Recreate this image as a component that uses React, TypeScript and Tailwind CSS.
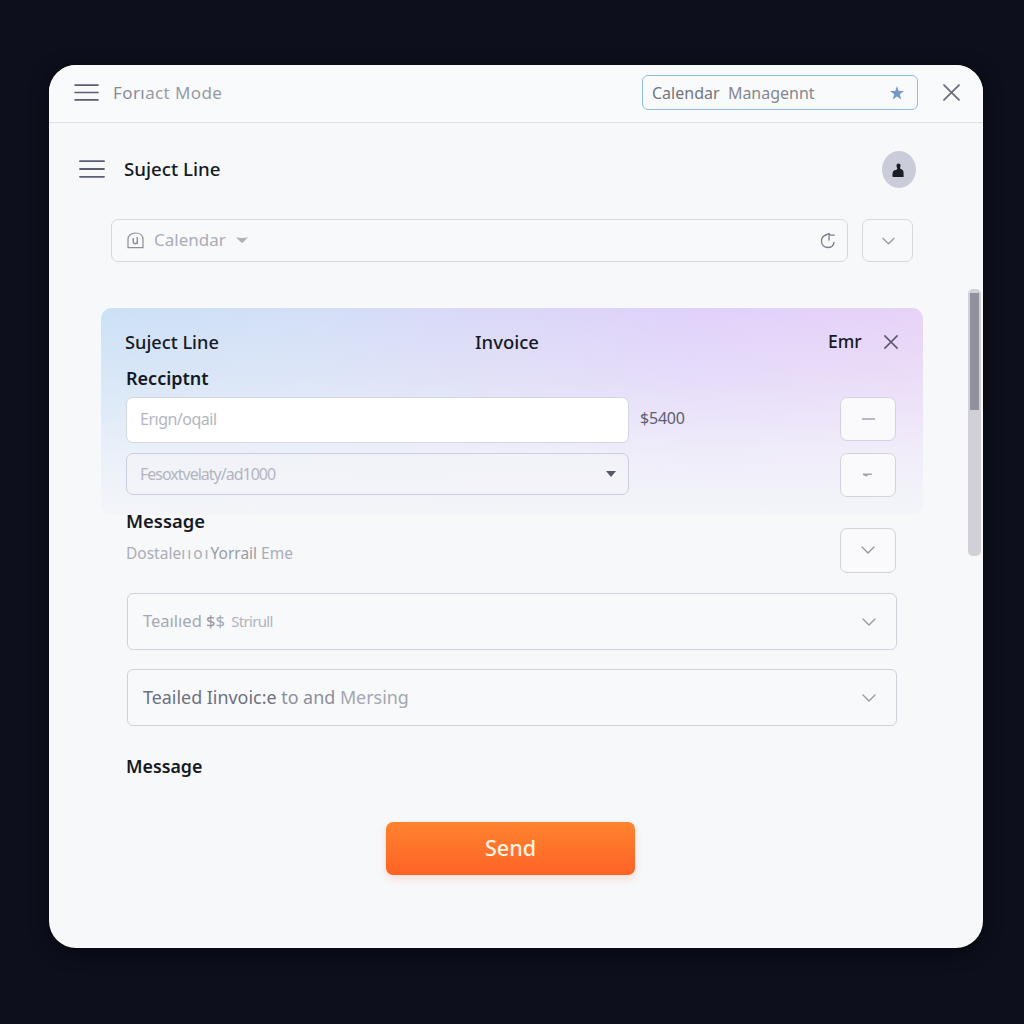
import React from "react";

type IconProps = { className?: string };

const Menu = ({ className }: IconProps) => (
  <svg viewBox="0 0 26 20" className={className} fill="none" stroke="#5b5e73" strokeWidth="1.8" strokeLinecap="round">
    <path d="M1 2.200h24M1 10h24M1 17.800h24" />
  </svg>
);

const Cross = ({ className }: IconProps) => (
  <svg viewBox="0 0 16 16" className={className} fill="none" stroke="currentColor" strokeWidth="1.7" strokeLinecap="round">
    <path d="M1 1l14 14M15 1L1 15" />
  </svg>
);

const Chevron = ({ className }: IconProps) => (
  <svg viewBox="0 0 14 8" className={className} fill="none" stroke="#9699a5" strokeWidth="1.4" strokeLinecap="round" strokeLinejoin="round">
    <path d="M1 1l6 6 6-6" />
  </svg>
);

const Star = () => (
  <svg viewBox="0 0 14 14" className="h-[14px] w-[14px]" fill="#7598c8">
    <path d="M7 0l1.700 4.900 5.300.1-4.200 3.200L11.300 13.500 7 10.600 2.700 13.500 4.200 8.200 0 5l5.300-.1z" />
  </svg>
);

const Badge = () => (
  <svg viewBox="0 0 17 17" className="h-[17px] w-[17px]" fill="none" stroke="#8b8e9d" strokeWidth="1.2">
    <path d="M1 15.700V7.500C1 3.500 4 1 8.500 1S16 3.500 16 7.500v8.200z" strokeLinejoin="round" />
    <path d="M6.300 6v3.700c0 2.700 3.900 2.700 3.900 0M10.300 5v7" strokeWidth="1.4" />
  </svg>
);

const Refresh = () => (
  <svg viewBox="0 0 16 17" className="h-[17px] w-4" fill="none" stroke="#7d808b" strokeWidth="1.3" strokeLinecap="round">
    <path d="M6 3C2.800 3.900 1.500 6.300 1.500 9.200c0 3.700 2.800 6.300 6.400 6.300 3.200 0 5.700-2.100 6.100-5.200" />
    <path d="M5.500 3.200L9 1.500l1.500 1.600h3.800M9 2v6.200" />
  </svg>
);

const Avatar = () => (
  <div className="flex h-[37px] w-[34px] items-center justify-center rounded-[50%] bg-[#cbccda]">
    <svg viewBox="0 0 12 15" className="mt-[3px] mr-[3px] h-[15px] w-3" fill="#1a1d22">
      <path d="M4.500 2.800C4.500 1.300 5.400.600 6.500.600S8.600 1.400 8.500 3c0 1-.600 1.500-.500 2.300.100.900 2.700 1 3.300 2.600.400 1.500.400 4.500.300 6.200H.700C.200 11.500.400 9 1.600 7.700 2.800 6.900 5 7 5.300 5.700c.100-.800-.800-1.500-.800-2.900z" />
    </svg>
  </div>
);

const SquareButton = ({ children, className }: { children: React.ReactNode; className: string }) => (
  <button className={`flex items-center justify-center rounded-[7px] border ${className}`}>{children}</button>
);

const SelectBox = ({ children }: { children: React.ReactNode }) => (
  <div className="flex h-[57px] w-[770px] items-center justify-between rounded-[6px] border border-[#d0d1da] bg-[#f8f9fb] pr-5 pl-[15px]">
    <p className="whitespace-pre">{children}</p>
    <Chevron className="mt-px h-[8px] w-[14px]" />
  </div>
);

export default function App() {
  return (
    <div className="h-[1024px] w-[1024px] overflow-hidden bg-[#0d101c] pt-[65px] pl-[49px] font-['Noto_Sans',sans-serif] leading-none text-[#151923]">
      <main className="relative h-[883px] w-[934px] overflow-hidden rounded-[27px] bg-[#f7f8fa] shadow-[0_4px_18px_#05070e]">
        <header className="flex h-[58px] items-center border-b border-[#dfe0e5] bg-[#f9fafc] pb-[2px] pl-[25px]">
          <Menu className="h-[19px] w-[25px]" />
          <span className="ml-[14px] w-[529px] text-[17px] tracking-[0.4px] text-[#969aa4]">
            <span className="text-[#888b95]">Forı</span>act Mode
          </span>
          <div className="flex h-[35px] w-[276px] items-center justify-between rounded-[6px] border border-[#8fbdd9] bg-[#f9fafc] pr-[13px] pl-[9px]">
            <span className="text-[16px] whitespace-pre text-[#72757e]">
              Calendar  <span className="text-[#85878f]">Managennt</span>
            </span>
            <Star />
          </div>
          <Cross className="ml-[25px] h-[17px] w-[17px] text-[#6c6f7b]" />
        </header>

        <section className="mt-[27px] flex h-[38px] items-center pr-[67px] pl-[30px]">
          <Menu className="h-[20px] w-[26px]" />
          <h1 className="ml-[19px] flex-1 text-[18.700px] font-medium">Suject Line</h1>
          <Avatar />
        </section>

        <section className="mt-[31px] flex gap-[14px] pl-[62px]">
          <div className="flex h-[43px] w-[737px] items-center rounded-[7px] border border-[#d6d7df] bg-[#f8f9fb] pr-[11px] pb-px pl-[15px]">
            <Badge />
            <span className="-mt-px ml-[10px] text-[17px] text-[#aaadb6]">Calendar</span>
            <svg viewBox="0 0 12 6" className="ml-[10px] h-[6px] w-3" fill="#afb1b9"><path d="M0 0.300Q6 1.700 12 0.300L6.800 5.500Q6 6 5.200 5.500z" /></svg>
            <span className="ml-auto"><Refresh /></span>
          </div>
          <SquareButton className="h-[43px] w-[51px] border-[#d6d7df] bg-[#f8f9fb]"><Chevron className="ml-px h-[8px] w-[13px]" /></SquareButton>
        </section>

        <section className="mt-[46px] ml-[52px] h-[207px] w-[822px] rounded-[11px] bg-[linear-gradient(180deg,rgba(247,248,251,0)_0%,rgba(245,246,250,0.3)_35%,rgba(244,245,250,0.76)_70%,#f3f5f9_100%),linear-gradient(90deg,#cce1f6_0%,#d3dff7_25%,#dad8f7_48%,#e0d1fa_72%,#e7d3f7_100%)] pt-[22px] pr-[25px] pl-[24px]">
          <div className="flex h-6 items-center text-[18.200px] font-medium">
            <h2 className="w-[350px]">Suject Line</h2>
            <span className="w-[353px] text-[18.500px]">Invoice</span>
            <span className="w-[56px] text-[17.500px]">Emr</span>
            <Cross className="-mt-px h-[14px] w-[14px] text-[#59566f]" />
          </div>
          <h3 className="mt-3 ml-px h-6 text-[18px] leading-6 font-semibold">Recciptnt</h3>
          <div className="mt-[7px] ml-px flex">
            <div className="flex w-[503px] flex-col gap-[10px]">
              <div className="flex h-[46px] items-center rounded-[7px] border border-[#d4d6e2] bg-white pb-0.5 pl-[13px] text-[16px] tracking-[-0.5px] text-[#b3b6c0]">Erıgn/oqail</div>
              <div className="flex h-[42px] items-center justify-between rounded-[7px] border border-[#cacddb] bg-[#f5f6fa]/50 pr-3 pl-[13px] text-[16px] text-[#b2b5c1]">
                <span className="tracking-[-1px]">Fesoxtvelaty/ad1000</span>
                <svg viewBox="0 0 10 6" className="h-[6px] w-[10px]" fill="#535763"><path d="M0 0h10L5 6z" /></svg>
              </div>
            </div>
            <span className="mt-[13px] ml-[11px] w-[200px] text-[16px] tracking-[-0.200px] text-[#5c5f70]">$5400</span>
            <div className="flex flex-col gap-3">
              <SquareButton className="h-[44px] w-[56px] border-[#d3d2df] bg-[#fafafc]"><span className="h-[2px] w-[13px] bg-[#b9bac4]" /></SquareButton>
              <SquareButton className="h-[44px] w-[56px] border-[#d3d2df] bg-[#fafafc]">
                <svg viewBox="0 0 9 4" className="mr-[2px] mb-px h-1 w-[9px]" fill="#a0a2ac"><path d="M0 .500h9v1.200L5 2.200 3.500 3.500 0 2z" /></svg>
              </SquareButton>
            </div>
          </div>
        </section>

        <section className="flex h-[78px] justify-between pr-[87px] pl-[77px]">
          <div>
            <h3 className="-mt-[6px] text-[18.400px] leading-6 font-semibold">Message</h3>
            <p className="mt-[8px] text-[15.500px] leading-6 whitespace-pre text-[#abadb6]">Dostale<span className="tracking-[2px]">ııoı</span><span className="text-[#999ca5]">Yorrail</span> Eme</p>
          </div>
          <SquareButton className="mt-[13px] h-[45px] w-[56px] border-[#d3d4dc] bg-[#fafafc]"><Chevron className="mb-px h-[8px] w-[14px]" /></SquareButton>
        </section>

        <section className="flex flex-col gap-[19px] pl-[78px]">
          <SelectBox>
            <span className="text-[16.500px] text-[#a5a8b2]">Teaılıed <span className="text-[#9295a0]">$</span>$ </span>
            <span className="ml-0.5 text-[15px] tracking-[-0.700px] text-[#b1b4bd]">Strirull</span>
          </SelectBox>
          <SelectBox>
            <span className="text-[17.900px] text-[#6c707e]">Teailed Iinvoic:e </span>
            <span className="text-[17.900px] text-[#8b8e99]">to and </span>
            <span className="text-[17.900px] text-[#a4a6b0]">Mersing</span>
          </SelectBox>
        </section>

        <h3 className="mt-[28px] ml-[77px] text-[17.800px] leading-6 font-semibold">Message</h3>

        <button className="mt-[44px] ml-[337px] flex h-[53px] w-[249px] items-center justify-center rounded-[7px] bg-linear-to-b from-[#ff8330] to-[#fe6225] pb-px text-[21.500px] font-medium text-[#fff3e2] shadow-[0_4px_9px_rgba(255,120,70,0.2)]">Send</button>

        <div className="absolute top-[224px] right-[2px] h-[267px] w-[13px] rounded-[5px] bg-[#d0d0d6] pt-1 pl-[2px]">
          <div className="h-[117px] w-[9px] bg-[#8f929d]" />
        </div>
      </main>
    </div>
  );
}
